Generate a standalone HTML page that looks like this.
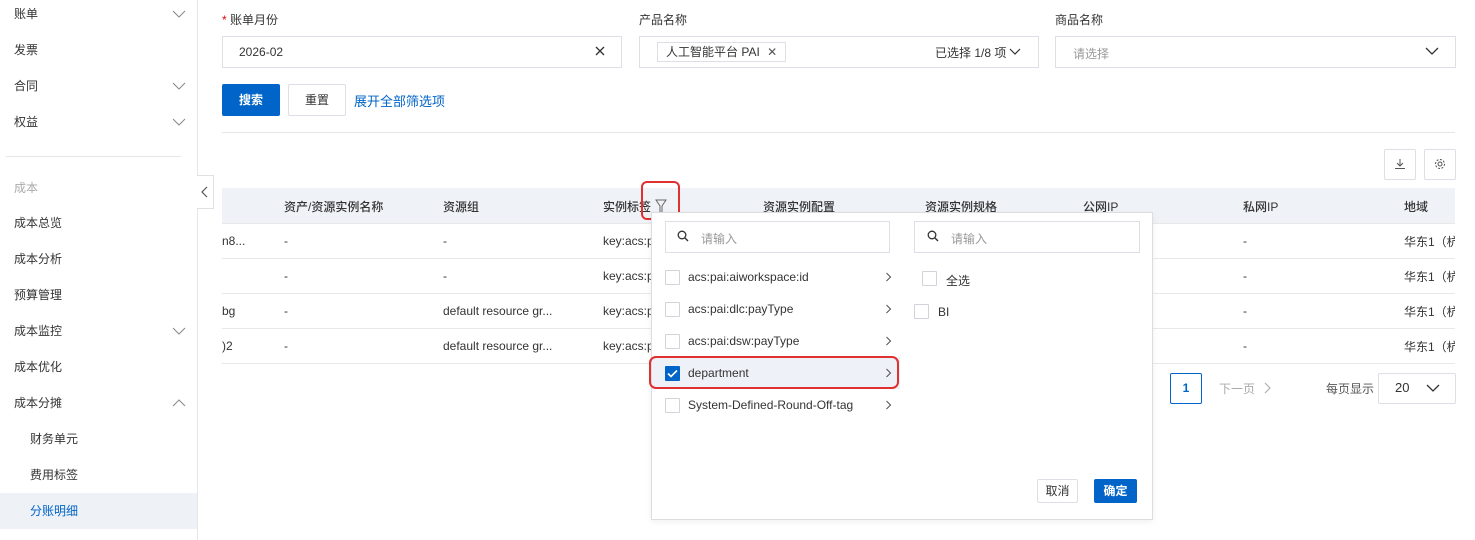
<!DOCTYPE html>
<html><head><meta charset="utf-8"><style>
*{box-sizing:border-box;margin:0;padding:0}
body{width:1475px;height:540px;overflow:hidden;background:#fff;font-family:"Liberation Sans","Noto Sans CJK SC",sans-serif;font-size:12px;color:#333;position:relative}
.a{position:absolute}
.m{position:absolute;left:14px;font-size:12px;color:#333;line-height:14px}
.chev{position:absolute;left:172px;width:14px;height:8px}
.inp{position:absolute;border:1px solid #dcdfe6;background:#fff;height:32px}
.lbl{position:absolute;top:11px;font-size:12px;color:#333}
.th{position:absolute;top:198px;font-size:12px;color:#333;font-weight:500}
.td{position:absolute;font-size:12px;color:#333}
.cb{position:absolute;width:15px;height:15px;border:1px solid #d0d4da;background:#fff;border-radius:1px}
.it{position:absolute;left:688px;font-size:12px;color:#333}
.ar{position:absolute;left:885px;width:7px;height:10px}
</style></head><body>
<!-- sidebar -->
<div class="a" style="left:197px;top:0;width:1px;height:540px;background:#e5e6e8"></div>
<div class="m" style="top:7px">账单</div>
<div class="m" style="top:43px">发票</div>
<div class="m" style="top:79px">合同</div>
<div class="m" style="top:115px">权益</div>
<svg class="chev" style="top:10px" viewBox="0 0 14 8"><path d="M1 1l6 6 6-6" fill="none" stroke="#888" stroke-width="1"/></svg>
<svg class="chev" style="top:82px" viewBox="0 0 14 8"><path d="M1 1l6 6 6-6" fill="none" stroke="#888" stroke-width="1"/></svg>
<svg class="chev" style="top:118px" viewBox="0 0 14 8"><path d="M1 1l6 6 6-6" fill="none" stroke="#888" stroke-width="1"/></svg>
<div class="a" style="left:6px;top:156px;width:175px;height:1px;background:#e5e6e8"></div>
<div class="m" style="top:181px;color:#aaa">成本</div>
<div class="m" style="top:216px">成本总览</div>
<div class="m" style="top:252px">成本分析</div>
<div class="m" style="top:288px">预算管理</div>
<div class="m" style="top:324px">成本监控</div>
<svg class="chev" style="top:327px" viewBox="0 0 14 8"><path d="M1 1l6 6 6-6" fill="none" stroke="#888" stroke-width="1"/></svg>
<div class="m" style="top:360px">成本优化</div>
<div class="m" style="top:396px">成本分摊</div>
<svg class="chev" style="top:399px" viewBox="0 0 14 8"><path d="M1 7l6-6 6 6" fill="none" stroke="#888" stroke-width="1"/></svg>
<div class="m" style="top:432px;left:30px">财务单元</div>
<div class="m" style="top:468px;left:30px">费用标签</div>
<div class="a" style="left:0;top:493px;width:197px;height:36px;background:#eef1f6"></div>
<div class="m" style="top:504px;left:30px;color:#0064c8">分账明细</div>
<div class="a" style="left:197px;top:175px;width:17px;height:34px;border:1px solid #e0e0e0;border-left:none;background:#fff"></div>
<svg class="a" style="left:201px;top:186px" width="8" height="12" viewBox="0 0 8 12"><path d="M6 1L1 6l5 5" fill="none" stroke="#555" stroke-width="1.2"/></svg>

<!-- filters -->
<div class="lbl" style="left:222px"><span style="color:#e00">*</span> 账单月份</div>
<div class="lbl" style="left:639px">产品名称</div>
<div class="lbl" style="left:1055px">商品名称</div>
<div class="inp" style="left:222px;top:36px;width:400px"></div>
<div class="a" style="left:239px;top:45px;font-size:12px">2026-02</div>
<svg class="a" style="left:595px;top:46px" width="10" height="10" viewBox="0 0 10 10"><path d="M1 1l8 8M9 1l-8 8" stroke="#333" stroke-width="1.3"/></svg>
<div class="inp" style="left:639px;top:36px;width:400px"></div>
<div class="a" style="left:657px;top:42px;height:20px;border:1px solid #dcdfe6;padding:0 8px;line-height:18px;font-size:12px">人工智能平台 PAI <span style="margin-left:4px;color:#555">✕</span></div>
<div class="a" style="left:935px;top:44px;font-size:12px">已选择 1/8 项</div>
<svg class="a" style="left:1009px;top:48px" width="12" height="8" viewBox="0 0 12 8"><path d="M1 1l5 5 5-5" fill="none" stroke="#333" stroke-width="1.2"/></svg>
<div class="inp" style="left:1055px;top:36px;width:401px"></div>
<div class="a" style="left:1073px;top:45px;color:#999">请选择</div>
<svg class="a" style="left:1425px;top:47px" width="14" height="8" viewBox="0 0 14 8"><path d="M1 1l6 6 6-6" fill="none" stroke="#333" stroke-width="1.3"/></svg>
<div class="a" style="left:222px;top:84px;width:58px;height:32px;background:#0064c8;border-radius:2px;color:#fff;font-weight:bold;text-align:center;line-height:32px">搜索</div>
<div class="a" style="left:288px;top:84px;width:58px;height:32px;border:1px solid #dcdfe6;border-radius:2px;text-align:center;line-height:30px">重置</div>
<div class="a" style="left:354px;top:91px;font-size:13px;color:#0064c8">展开全部筛选项</div>
<div class="a" style="left:222px;top:132px;width:1233px;height:1px;background:#e5e6e8"></div>
<div class="a" style="left:1384px;top:149px;width:32px;height:31px;border:1px solid #dcdfe6;border-radius:2px"></div>
<svg class="a" style="left:1394px;top:158px" width="12" height="12" viewBox="0 0 12 12"><path d="M6 1v7M3 5l3 3 3-3M1 10.5h10" fill="none" stroke="#555" stroke-width="1"/></svg>
<div class="a" style="left:1424px;top:149px;width:32px;height:31px;border:1px solid #dcdfe6;border-radius:2px"></div>
<svg class="a" style="left:1434px;top:158px" width="12" height="12" viewBox="0 0 12 12"><circle cx="6" cy="6" r="2" fill="none" stroke="#555"/><circle cx="6" cy="6" r="4.5" fill="none" stroke="#555" stroke-dasharray="2 1.5"/></svg>

<!-- table -->
<div class="a" style="left:222px;top:188px;width:1233px;height:35px;background:#eff2f7"></div>
<div class="th" style="left:284px">资产/资源实例名称</div>
<div class="th" style="left:443px">资源组</div>
<div class="th" style="left:603px">实例标签</div>
<svg class="a" style="left:655px;top:199px" width="12" height="15" viewBox="0 0 12 15"><path d="M1 1h10L7 7v6.5l-2 1V7z" fill="none" stroke="#666" stroke-width="1"/></svg>
<div class="a" style="left:641px;top:181px;width:39px;height:39px;border:2px solid #e03030;border-radius:6px"></div>
<div class="th" style="left:763px">资源实例配置</div>
<div class="th" style="left:925px">资源实例规格</div>
<div class="th" style="left:1083px">公网IP</div>
<div class="th" style="left:1243px">私网IP</div>
<div class="th" style="left:1404px">地域</div>
<div class="a" style="left:222px;top:258px;width:1233px;height:1px;background:#e8e8e8"></div>
<div class="a" style="left:222px;top:293px;width:1233px;height:1px;background:#e8e8e8"></div>
<div class="a" style="left:222px;top:328px;width:1233px;height:1px;background:#e8e8e8"></div>
<div class="a" style="left:222px;top:363px;width:1233px;height:1px;background:#e8e8e8"></div>
<div class="a" style="left:222px;top:223px;width:1233px;height:1px;background:#e8e8e8"></div>

<div class="td" style="left:222px;top:234px">n8...</div>
<div class="td" style="left:222px;top:304px">bg</div>
<div class="td" style="left:222px;top:339px">)2</div>
<div class="td" style="left:284px;top:234px">-</div><div class="td" style="left:284px;top:269px">-</div><div class="td" style="left:284px;top:304px">-</div><div class="td" style="left:284px;top:339px">-</div>
<div class="td" style="left:443px;top:234px">-</div><div class="td" style="left:443px;top:269px">-</div>
<div class="td" style="left:443px;top:304px">default resource gr...</div><div class="td" style="left:443px;top:339px">default resource gr...</div>
<div class="td" style="left:603px;top:234px">key:acs:p</div><div class="td" style="left:603px;top:269px">key:acs:p</div><div class="td" style="left:603px;top:304px">key:acs:p</div><div class="td" style="left:603px;top:339px">key:acs:p</div>
<div class="td" style="left:1243px;top:234px">-</div><div class="td" style="left:1243px;top:269px">-</div><div class="td" style="left:1243px;top:304px">-</div><div class="td" style="left:1243px;top:339px">-</div>
<div class="td" style="left:1404px;top:233px;width:51px;overflow:hidden;white-space:nowrap">华东1（杭州）</div>
<div class="td" style="left:1404px;top:268px;width:51px;overflow:hidden;white-space:nowrap">华东1（杭州）</div>
<div class="td" style="left:1404px;top:303px;width:51px;overflow:hidden;white-space:nowrap">华东1（杭州）</div>
<div class="td" style="left:1404px;top:338px;width:51px;overflow:hidden;white-space:nowrap">华东1（杭州）</div>

<!-- pagination -->
<div class="a" style="left:1170px;top:373px;width:32px;height:31px;border:1px solid #0064c8;border-radius:2px;color:#0064c8;text-align:center;line-height:29px;font-weight:bold">1</div>
<div class="a" style="left:1219px;top:380px;color:#aaa">下一页</div>
<svg class="a" style="left:1264px;top:382px" width="8" height="12" viewBox="0 0 8 12"><path d="M1 1l5 5-5 5" fill="none" stroke="#aaa" stroke-width="1.1"/></svg>
<div class="a" style="left:1326px;top:380px;color:#555">每页显示</div>
<div class="a" style="left:1378px;top:373px;width:78px;height:31px;border:1px solid #dcdfe6;border-radius:2px"></div>
<div class="a" style="left:1395px;top:380px;font-size:13px">20</div>
<svg class="a" style="left:1426px;top:384px" width="14" height="8" viewBox="0 0 14 8"><path d="M1 1l6 6 6-6" fill="none" stroke="#333" stroke-width="1.3"/></svg>

<!-- popup -->
<div class="a" style="left:651px;top:212px;width:502px;height:308px;background:#fff;border:1px solid #ddd;box-shadow:0 2px 6px rgba(0,0,0,.06)"></div>
<div class="inp" style="left:665px;top:221px;width:225px"></div>
<div class="inp" style="left:914px;top:221px;width:226px"></div>
<svg class="a" style="left:677px;top:230px" width="12" height="12" viewBox="0 0 12 12"><circle cx="5" cy="5" r="3.8" fill="none" stroke="#333" stroke-width="1.3"/><path d="M8 8l3 3" stroke="#333" stroke-width="1.4"/></svg>
<div class="a" style="left:701px;top:230px;color:#999">请输入</div>
<svg class="a" style="left:927px;top:230px" width="12" height="12" viewBox="0 0 12 12"><circle cx="5" cy="5" r="3.8" fill="none" stroke="#333" stroke-width="1.3"/><path d="M8 8l3 3" stroke="#333" stroke-width="1.4"/></svg>
<div class="a" style="left:951px;top:230px;color:#999">请输入</div>
<div class="a" style="left:652px;top:357px;width:248px;height:32px;background:#eef1f7"></div>
<div class="cb" style="left:665px;top:270px"></div><div class="it" style="top:270px">acs:pai:aiworkspace:id</div><svg class="ar" style="top:272px" viewBox="0 0 7 10"><path d="M1.5 1l4 4-4 4" fill="none" stroke="#555" stroke-width="1.1"/></svg>
<div class="cb" style="left:665px;top:302px"></div><div class="it" style="top:302px">acs:pai:dlc:payType</div><svg class="ar" style="top:304px" viewBox="0 0 7 10"><path d="M1.5 1l4 4-4 4" fill="none" stroke="#555" stroke-width="1.1"/></svg>
<div class="cb" style="left:665px;top:334px"></div><div class="it" style="top:334px">acs:pai:dsw:payType</div><svg class="ar" style="top:336px" viewBox="0 0 7 10"><path d="M1.5 1l4 4-4 4" fill="none" stroke="#555" stroke-width="1.1"/></svg>
<div class="cb" style="left:665px;top:366px;background:#0064c8;border-color:#0064c8"></div>
<svg class="a" style="left:667px;top:369px" width="11" height="9" viewBox="0 0 11 9"><path d="M1 4.5l3 3 6-6" fill="none" stroke="#fff" stroke-width="1.6"/></svg>
<div class="it" style="top:366px">department</div><svg class="ar" style="top:368px" viewBox="0 0 7 10"><path d="M1.5 1l4 4-4 4" fill="none" stroke="#555" stroke-width="1.1"/></svg>
<div class="cb" style="left:665px;top:398px"></div><div class="it" style="top:398px">System-Defined-Round-Off-tag</div><svg class="ar" style="top:400px" viewBox="0 0 7 10"><path d="M1.5 1l4 4-4 4" fill="none" stroke="#555" stroke-width="1.1"/></svg>
<div class="a" style="left:649px;top:356px;width:250px;height:33px;border:2px solid #e03030;border-radius:7px"></div>
<div class="cb" style="left:922px;top:271px"></div><div class="a" style="left:946px;top:272px">全选</div>
<div class="cb" style="left:914px;top:304px"></div><div class="a" style="left:938px;top:305px">BI</div>
<div class="a" style="left:1037px;top:479px;width:41px;height:24px;border:1px solid #dcdfe6;border-radius:2px;text-align:center;line-height:22px">取消</div>
<div class="a" style="left:1094px;top:479px;width:43px;height:24px;background:#0064c8;border-radius:2px;color:#fff;font-weight:bold;text-align:center;line-height:24px">确定</div>
</body></html>
